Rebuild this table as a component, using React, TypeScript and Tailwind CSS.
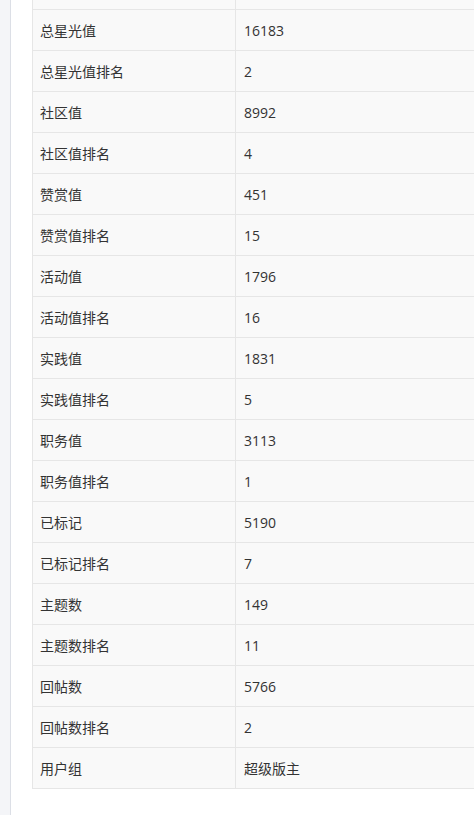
const rows: [string, string][] = [
  ['总星光值', '16183'],
  ['总星光值排名', '2'],
  ['社区值', '8992'],
  ['社区值排名', '4'],
  ['赞赏值', '451'],
  ['赞赏值排名', '15'],
  ['活动值', '1796'],
  ['活动值排名', '16'],
  ['实践值', '1831'],
  ['实践值排名', '5'],
  ['职务值', '3113'],
  ['职务值排名', '1'],
  ['已标记', '5190'],
  ['已标记排名', '7'],
  ['主题数', '149'],
  ['主题数排名', '11'],
  ['回帖数', '5766'],
  ['回帖数排名', '2'],
  ['用户组', '超级版主'],
];

export default function App() {
  return (
    <div
      className="flex h-[815px] w-[474px] overflow-hidden bg-white text-[14px] text-[#333]"
      style={{ fontFamily: '"Segoe UI", "Open Sans", "Noto Sans CJK SC", sans-serif' }}
    >
      <div className="w-[11px] shrink-0 border-r border-[#dcdfe6] bg-[#f4f5f8]" />
      <div className="flex-1 pl-[21px]">
        <div className="w-[600px] border-l border-[#e6e6e6] bg-[#f9f9f9]">
          {/* tail of the row scrolled above */}
          <div className="grid h-[10px] grid-cols-[203px_1fr] border-b border-[#e6e6e6]">
            <div className="border-r border-[#e6e6e6]" />
            <div />
          </div>
          {rows.map(([label, value]) => (
            <div key={label} className="grid h-[41px] grid-cols-[203px_1fr] border-b border-[#e6e6e6]">
              <div className="flex items-center border-r border-[#e6e6e6] pl-[7px]">{label}</div>
              <div className="flex items-center pl-[8px]">{value}</div>
            </div>
          ))}
        </div>
      </div>
    </div>
  );
}
